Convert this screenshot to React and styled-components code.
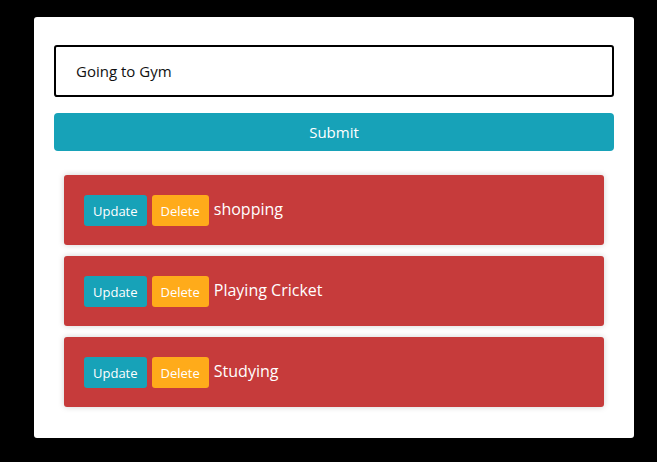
import React, { useState } from 'react';
import styled, { createGlobalStyle } from 'styled-components';

const Global = createGlobalStyle`
  html, body {
    margin: 0;
    padding: 0;
    background: #000;
    height: 100%;
  }
  body {
    font-family: 'Open Sans', 'Noto Sans', sans-serif;
  }
`;

const Page = styled.div`
  width: 657px;
  height: 462px;
  background: #000;
  padding: 17px 0 0 34px;
  box-sizing: border-box;
`;

const Card = styled.div`
  width: 600px;
  height: 421px;
  background: #fff;
  border-radius: 3px;
  padding: 28px 20px 0;
  box-sizing: border-box;
`;

const Input = styled.input`
  display: block;
  width: 100%;
  height: 52px;
  box-sizing: border-box;
  border: 2px solid #000;
  border-radius: 3px;
  padding: 0 20px;
  font-family: inherit;
  font-size: 15px;
  color: #111;
  caret-color: #000;
  outline: none;
`;

const Submit = styled.button`
  display: block;
  width: 100%;
  height: 38px;
  margin-top: 16px;
  border: none;
  border-radius: 4px;
  background: #17a2b8;
  color: #fff;
  font-family: inherit;
  font-size: 15px;
`;

const List = styled.ul`
  list-style: none;
  margin: 24px 10px 0;
  padding: 0;
  display: flex;
  flex-direction: column;
  gap: 11px;
`;

const Item = styled.li`
  height: 70px;
  box-sizing: border-box;
  padding: 20px 20px 0;
  background: #c63b3b;
  border-radius: 3px;
  box-shadow: 0 0 6px rgba(0, 0, 0, 0.18);
  display: flex;
  align-items: flex-start;
  gap: 5px;
  color: #fff;
`;

const Btn = styled.button`
  height: 31px;
  padding: 0 9px;
  border: none;
  border-radius: 3px;
  background: ${p => (p.$kind === 'update' ? '#17a2b8' : '#ffab1a')};
  color: #fff;
  font-family: inherit;
  font-size: 13px;
`;

const Label = styled.span`
  font-size: 16px;
  line-height: 28px;
`;

const todos = ['shopping', 'Playing Cricket', 'Studying'];

export default function App() {
  const [text, setText] = useState('Going to Gym');
  return (
    <Page>
      <Global />
      <Card>
        <Input autoFocus value={text} onChange={e => setText(e.target.value)} />
        <Submit>Submit</Submit>
        <List>
          {todos.map(t => (
            <Item key={t}>
              <Btn $kind="update">Update</Btn>
              <Btn $kind="delete">Delete</Btn>
              <Label>{t}</Label>
            </Item>
          ))}
        </List>
      </Card>
    </Page>
  );
}
